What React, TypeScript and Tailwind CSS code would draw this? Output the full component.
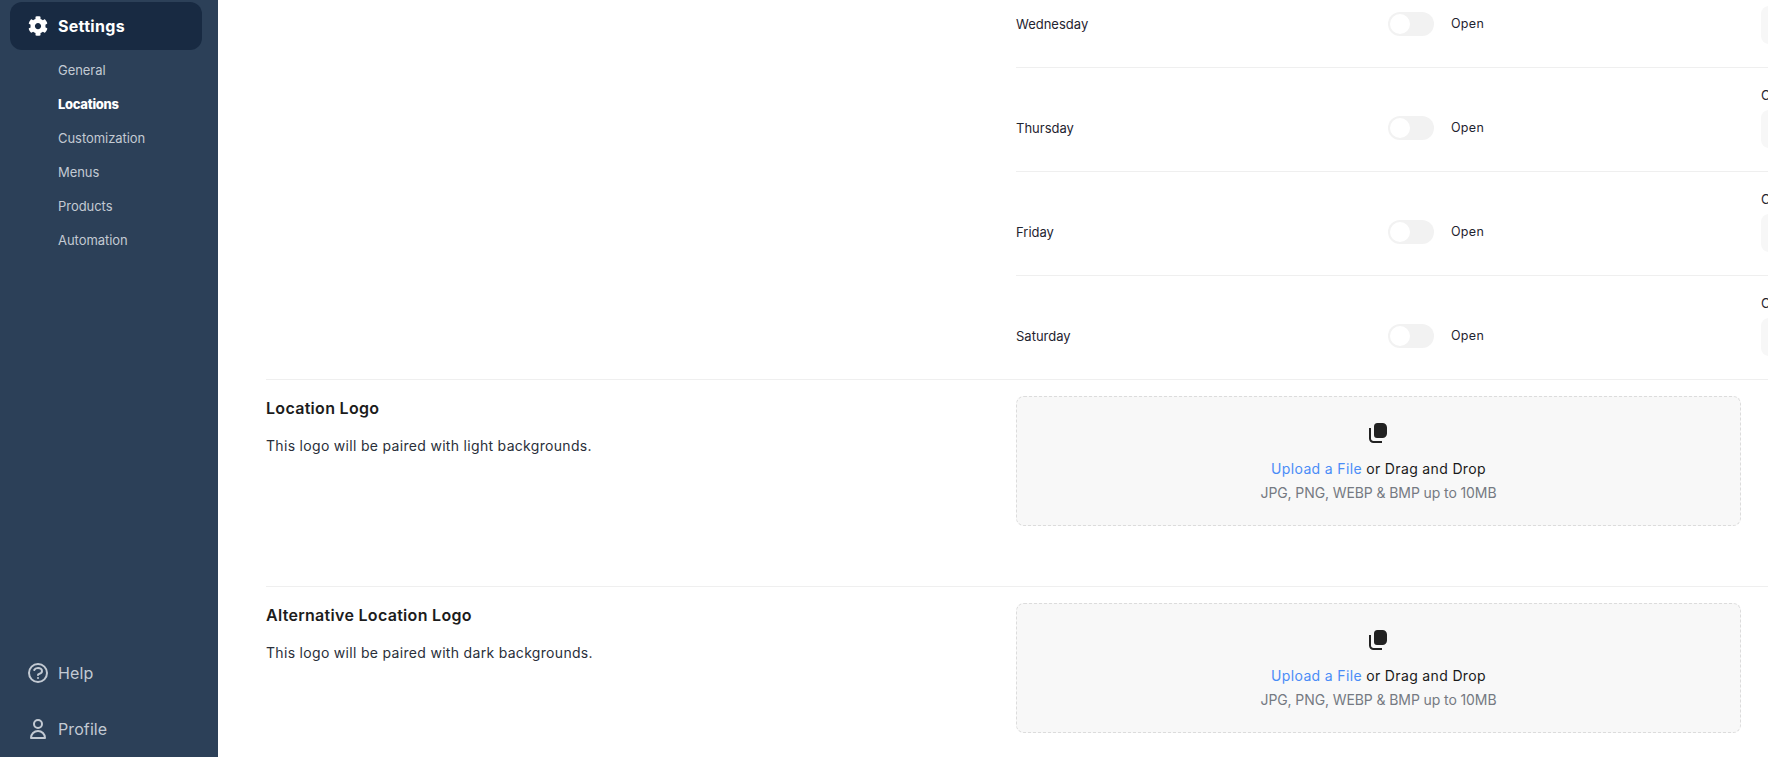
import React from "react";
import { FaCog } from "react-icons/fa";
import { HiOutlineQuestionMarkCircle, HiOutlineUser } from "react-icons/hi";

const font = { fontFamily: "Inter, 'Noto Sans', sans-serif" };

function DayRow({ day, label = true }: { day: string; label?: boolean }) {
  return (
    <div className="flex h-[104px] w-[900px] items-end border-b border-[#efefef] pb-[23px]">
      <div className="flex h-[38px] w-[372px] items-center text-[13px] text-[#1f2430]">{day}</div>
      <div className="flex h-[40px] w-[373px] items-center">
        <div className="h-[24px] w-[46px] rounded-full bg-[#f2f2f2] p-[2px]">
          <div className="h-[20px] w-[20px] rounded-full bg-white" />
        </div>
        <span className="mt-[1px] ml-[17px] text-[12.5px] tracking-[0.3px] text-[#1f2430]">Open</span>
      </div>
      <div className="w-[120px]">
        <div className="mb-[5px] text-[13px] text-[#1f2430]">{label ? "Closes at" : ""}</div>
        <div className="h-[38px] rounded-lg bg-[#f7f7f7]" />
      </div>
    </div>
  );
}

function FilesIcon() {
  return (
    <svg width="18" height="20" viewBox="0 0 18 20" fill="none" className="-ml-[1px]">
      <path d="M8.5 0h5a4.5 4.5 0 0 1 4.5 4.5v6a4.5 4.5 0 0 1-4.5 4.5H8a3 3 0 0 1-3-3V3.5A3.5 3.5 0 0 1 8.5 0z" fill="#222222" />
      <path d="M1 5v10.5A3.5 3.5 0 0 0 4.5 19H13" stroke="#222222" strokeWidth="2" />
    </svg>
  );
}

function Upload() {
  return (
    <div className="flex h-[130px] w-[725px] flex-col items-center rounded-lg border border-dashed border-[#dcdcdc] bg-[#f8f8f8] pt-[26px]">
      <FilesIcon />
      <div className="mt-[14px] text-[14px] leading-[24px] tracking-[0.35px] text-[#1a1a1a]">
        <span className="text-[#4a8cf7]">Upload a File</span> or Drag and Drop
      </div>
      <div className="text-[14px] leading-[24px] tracking-[-0.1px] text-[#757a82]">JPG, PNG, WEBP &amp; BMP up to 10MB</div>
    </div>
  );
}

function LogoSection({ title, text }: { title: string; text: string }) {
  return (
    <section className="flex border-t border-[#efefef] pt-[16px] pb-[60px]">
      <div className="w-[750px] shrink-0">
        <h3 className="text-[16px] leading-[24px] font-semibold tracking-[0.3px] text-[#1c1c1c]">{title}</h3>
        <p className="mt-[14px] text-[14px] leading-[24px] tracking-[0.31px] text-[#2a2f3a]">{text}</p>
      </div>
      <Upload />
    </section>
  );
}

const links = ["General", "Locations", "Customization", "Menus", "Products", "Automation"];

export default function App() {
  return (
    <div className="flex h-[757px] w-[1768px] overflow-hidden bg-white" style={font}>
      <aside className="flex h-full w-[218px] shrink-0 flex-col justify-between bg-[#2c4058] pb-[16px]">
        <div className="pt-[2px] pl-[10px]">
          <div className="flex h-[48px] w-[192px] items-center gap-[10px] rounded-xl bg-[#182a42] pl-[18px] text-[16px] font-bold tracking-[0.3px] text-white">
            <FaCog className="h-[20px] w-[20px]" />
            <span>Settings</span>
          </div>
          <nav className="mt-[4px] flex flex-col pl-[48px]">
            {links.map((l) => (
              <a
                key={l}
                className={
                  l === "Locations"
                    ? "flex h-[34px] items-center text-[13px] font-extrabold tracking-[-0.3px] text-white"
                    : "flex h-[34px] items-center text-[13px] tracking-[-0.05px] text-[#c3cad3]"
                }
              >
                {l}
              </a>
            ))}
          </nav>
        </div>
        <div className="flex flex-col gap-[32px] pl-[26px] text-[16px] tracking-[0.1px] text-[#c3cad3]">
          <div className="flex h-[24px] items-center gap-[8px]">
            <HiOutlineQuestionMarkCircle className="h-[24px] w-[24px]" />
            <span>Help</span>
          </div>
          <div className="flex h-[24px] items-center gap-[8px]">
            <HiOutlineUser className="h-[24px] w-[24px]" />
            <span>Profile</span>
          </div>
        </div>
      </aside>
      <main className="min-w-0 flex-1 overflow-hidden pl-[48px]">
        <div className="-mt-[36px]">
          <section className="flex">
            <div className="w-[750px] shrink-0" />
            <div className="shrink-0">
              {["Wednesday", "Thursday", "Friday", "Saturday"].map((d) => (
                <DayRow key={d} day={d} />
              ))}
            </div>
          </section>
          <div className="-mt-px">
            <LogoSection title="Location Logo" text="This logo will be paired with light backgrounds." />
            <LogoSection title="Alternative Location Logo" text="This logo will be paired with dark backgrounds." />
          </div>
        </div>
      </main>
    </div>
  );
}
